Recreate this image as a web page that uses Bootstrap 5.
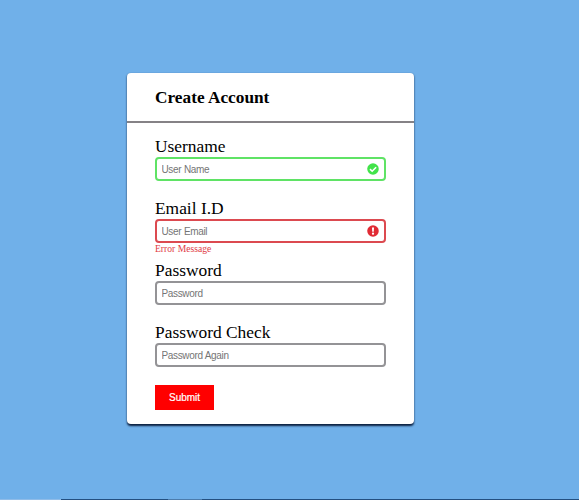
<!DOCTYPE html>
<html lang="en">
<head>
<meta charset="utf-8">
<meta name="viewport" content="width=device-width, initial-scale=1">
<title>Create Account</title>
<link rel="stylesheet" href="https://cdn.jsdelivr.net/npm/bootstrap@5.3.0/dist/css/bootstrap.min.css">
<style>
body { background: #70b0e9; font-family: "Liberation Serif", "Times New Roman", serif; color: #000; }
.page { height: 500px; padding-top: 73px; padding-left: 126.5px; }
.signup { width: 287.8px; height: 351px; background: #fff; border-radius: 4px; box-shadow: 0 1.5px 2px rgba(0,15,45,.9); }
.signup-head { height: 50px; padding: 0 28.5px; border-bottom: 2px solid #858286; }
.signup-head h1 { font-size: 17.3px; line-height: 20px; font-weight: 700; padding-top: 1px; }
.signup-body { padding: 13px 28.6px 0 28.5px; }
.field { height: 62px; }
.field label { font-size: 17.4px; line-height: 20px; height: 21px; }
.field .form-control { height: 24px; padding: 1px 4.5px 0; border: 2px solid #949396; border-radius: 4px; font: 10px "Liberation Sans", Arial, sans-serif; letter-spacing: -.35px; word-spacing: .3px; }
.field .form-control::placeholder { color: #757575; opacity: 1; }
.field.ok .form-control { border-color: #5fe365; }
.field.bad .form-control { border-color: #dc4a50; }
.field svg { right: 7px; top: 6px; width: 12px; height: 12px; }
.field small { font-size: 9.6px; line-height: 12px; color: #e13c46; }
.submit { width: 59px; height: 25px; margin-top: 1px; background: #f00; color: #fff; font: 10px "Liberation Sans", Arial, sans-serif; letter-spacing: -.05px; -webkit-text-stroke: .2px #fff; }
.submit:hover { background: #e00000; color: #fff; }
.taskbar { height: 1px; background: linear-gradient(90deg, #90bce8 0 61px, #234f80 61px 168px, #4c7cac 168px 202px, #234f80 202px); }
</style>
</head>
<body class="overflow-hidden">
<main class="page">
  <section class="signup">
    <header class="signup-head d-flex align-items-center"><h1 class="m-0">Create Account</h1></header>
    <form class="signup-body">
      <div class="field ok">
        <label class="d-block" for="username">Username</label>
        <div class="position-relative">
          <input class="form-control" id="username" type="text" placeholder="User Name">
          <svg class="position-absolute" viewBox="0 0 16 16" aria-hidden="true"><circle cx="8" cy="8" r="7.7" fill="#42e34a"/><path d="M4 8.2 6.9 11 12.2 5.6" fill="none" stroke="#fff" stroke-width="2.1"/></svg>
        </div>
      </div>
      <div class="field bad">
        <label class="d-block" for="email">Email I.D</label>
        <div class="position-relative">
          <input class="form-control" id="email" type="email" placeholder="User Email">
          <svg class="position-absolute" viewBox="0 0 16 16" aria-hidden="true"><circle cx="8" cy="8" r="7.7" fill="#e12b34"/><path d="M6.6 3.3h2.8L9 9H7z" fill="#fff"/><circle cx="8" cy="11.5" r="1.5" fill="#fff"/></svg>
        </div>
        <small class="d-block">Error Message</small>
      </div>
      <div class="field">
        <label class="d-block" for="password">Password</label>
        <input class="form-control" id="password" type="password" placeholder="Password">
      </div>
      <div class="field">
        <label class="d-block" for="password2">Password Check</label>
        <input class="form-control" id="password2" type="password" placeholder="Password Again">
      </div>
      <button class="submit btn rounded-0 border-0 p-0 d-block" type="button">Submit</button>
    </form>
  </section>
</main>
<div class="taskbar fixed-bottom"></div>
<script src="https://cdn.jsdelivr.net/npm/bootstrap@5.3.0/dist/js/bootstrap.bundle.min.js"></script>
</body>
</html>
